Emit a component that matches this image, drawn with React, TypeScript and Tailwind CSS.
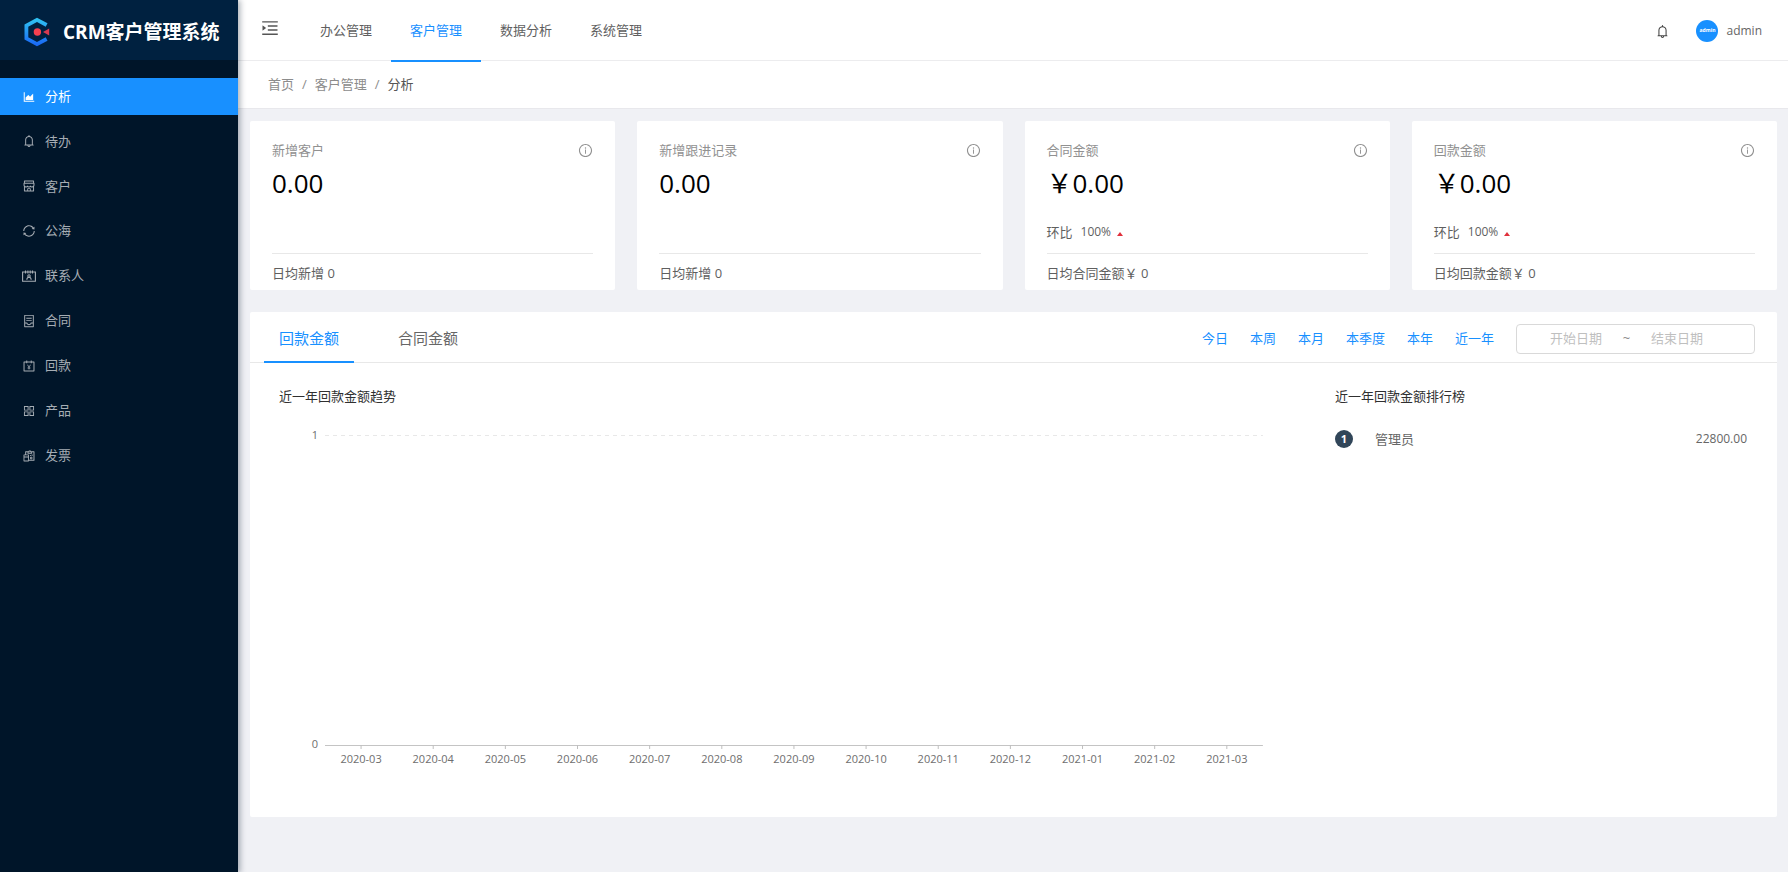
import type { ComponentType } from "react";
import {
  AiOutlineAreaChart,
  AiOutlineBell,
  AiOutlineShop,
  AiOutlineSync,
  AiOutlineContainer,
  AiOutlineAccountBook,
  AiOutlineAppstore,
  AiOutlineReconciliation,
  AiOutlineMenuUnfold,
  AiOutlineInfoCircle,
} from "react-icons/ai";

function ContactsIcon({ className }: { className?: string }) {
  return (
    <svg viewBox="0 0 28 28" className={className} fill="none" stroke="currentColor" strokeWidth="2.2" aria-hidden="true">
      <path d="M1.2 6 H26.8 V24.6 H1.2 Z" />
      <path d="M7 3 V9 M11.8 3 V9 M16.4 3 V9 M21 3 V9" />
      <circle cx="14" cy="14" r="2.4" />
      <path d="M9.6 21.5 C9.8 18 11.6 16.6 14 16.6 S18.2 18 18.4 21.5" />
    </svg>
  );
}

const menu: { label: string; icon: ComponentType<{ className?: string }> }[] = [
  { label: "分析", icon: AiOutlineAreaChart },
  { label: "待办", icon: AiOutlineBell },
  { label: "客户", icon: AiOutlineShop },
  { label: "公海", icon: AiOutlineSync },
  { label: "联系人", icon: ContactsIcon },
  { label: "合同", icon: AiOutlineContainer },
  { label: "回款", icon: AiOutlineAccountBook },
  { label: "产品", icon: AiOutlineAppstore },
  { label: "发票", icon: AiOutlineReconciliation },
];

const topNav = ["办公管理", "客户管理", "数据分析", "系统管理"];

const stats = [
  { title: "新增客户", value: "0.00", footer: "日均新增 0" },
  { title: "新增跟进记录", value: "0.00", footer: "日均新增 0" },
  { title: "合同金额", value: "￥0.00", ratio: "100%", footer: "日均合同金额￥ 0" },
  { title: "回款金额", value: "￥0.00", ratio: "100%", footer: "日均回款金额￥ 0" },
];

const ranges = ["今日", "本周", "本月", "本季度", "本年", "近一年"];

const months = [
  "2020-03", "2020-04", "2020-05", "2020-06", "2020-07", "2020-08", "2020-09",
  "2020-10", "2020-11", "2020-12", "2021-01", "2021-02", "2021-03",
];

function Logo() {
  return (
    <svg viewBox="0 0 26 30" className="h-[30px] w-[26px] shrink-0" aria-hidden="true">
      <defs>
        <linearGradient id="logo" x1="0" y1="0" x2="0" y2="1">
          <stop offset="0" stopColor="#2fc0f2" />
          <stop offset="1" stopColor="#1a6bf5" />
        </linearGradient>
      </defs>
      <path
        d="M22.6 8 L13 2.8 L2.4 8.6 V21.4 L13 27.2 L22.6 22"
        fill="none"
        stroke="url(#logo)"
        strokeWidth="3.8"
      />
      <circle cx="13.4" cy="15" r="3.7" fill="#f5404f" />
      <path d="M19 15 L25.2 11.6 V18.4 Z" fill="#d83a50" />
    </svg>
  );
}

function Sidebar() {
  return (
    <aside className="z-10 w-[238px] shrink-0 bg-[#001529] shadow-[2px_0_6px_rgba(0,21,41,0.35)]">
      <div className="flex h-[60px] items-center gap-[13px] bg-[#002140] pt-1 pl-6">
        <Logo />
        <h1 className="text-[19px] leading-6 font-bold whitespace-nowrap text-white">CRM客户管理系统</h1>
      </div>
      <nav className="mt-[18px] flex h-[396px] flex-col justify-between">
        {menu.map(({ label, icon: Icon }, i) => (
          <a
            key={label}
            href="#"
            className={
              i === 0
                ? "flex h-[37px] items-center gap-[9px] bg-[#1890ff] pl-[22px] text-[13px] text-white"
                : "flex h-[37px] items-center gap-[9px] pl-[22px] text-[13px] text-[#a6adb4]"
            }
          >
            <Icon className="size-[14px]" />
            {label}
          </a>
        ))}
      </nav>
    </aside>
  );
}

function Header() {
  return (
    <header className="flex h-[61px] items-start border-b border-[#ececee] bg-white pr-[26px] pl-[22px]">
      <button type="button" aria-label="展开菜单" className="mt-[18px] text-[#555]">
        <AiOutlineMenuUnfold className="size-5" />
      </button>
      <nav className="ml-[21px] flex text-[13px] text-[#5f5f5f]">
        {topNav.map((label) => (
          <a
            key={label}
            href="#"
            className={
              label === "客户管理"
                ? "h-[62px] border-b-2 border-[#1890ff] px-[19px] leading-[60px] text-[#1890ff]"
                : "h-[62px] px-[19px] leading-[60px]"
            }
          >
            {label}
          </a>
        ))}
      </nav>
      <div className="ml-auto flex h-[62px] items-center text-[12px] text-[#666]">
        <button type="button" aria-label="通知">
          <AiOutlineBell className="size-[15px] text-[#444]" />
        </button>
        <span className="ml-[26px] flex size-[22px] items-center justify-center rounded-full bg-[#1890ff] text-[5px] font-bold text-white">
          admin
        </span>
        <a href="#" className="ml-2">admin</a>
      </div>
    </header>
  );
}

function StatCard({ title, value, ratio, footer }: { title: string; value: string; ratio?: string; footer: string }) {
  return (
    <section className="rounded-xs bg-white px-[22px] pt-[18px] pb-[6px] text-[13px]">
      <div className="flex items-center justify-between leading-[22px] text-[#919191]">
        <h2>{title}</h2>
        <AiOutlineInfoCircle className="size-[15px]" />
      </div>
      <p className="text-[26px] leading-[44px] text-black">{value}</p>
      <div className="mt-[14px] flex h-[34px] items-start text-[#5f5f5f]">
        {ratio && (
          <p className="flex items-center leading-[26px]">
            环比<span className="ml-2 text-[12px]">{ratio}</span>
            <svg viewBox="0 0 6 4" className="mt-1 ml-[6px] h-1 w-[6px]" aria-hidden="true">
              <path d="M3 0 L6 4 H0 Z" fill="#e0303c" />
            </svg>
          </p>
        )}
      </div>
      <p className="border-t border-[#e8e8e8] pt-2 leading-[22px] text-[#5f5f5f]">{footer}</p>
    </section>
  );
}

function TrendChart() {
  const step = 100 / months.length;
  return (
    <svg className="mt-[23px] mr-[56px] ml-[46px] block h-[340px] w-[calc(100%-102px)] overflow-visible text-[11px]" role="img" aria-label="近一年回款金额趋势">
      <g fill="#6e6e6e">
        <text x="-7" y="9" textAnchor="end">1</text>
        <text x="-7" y="318" textAnchor="end">0</text>
      </g>
      <line x1="0" y1="5.5" x2="100%" y2="5.5" stroke="#e8e8e8" strokeDasharray="4 4" />
      <line x1="0" y1="315.5" x2="100%" y2="315.5" stroke="#c4c4c4" />
      {months.map((m, i) => {
        const x = `${step * (i + 0.5)}%`;
        return (
          <g key={m}>
            <line x1={x} x2={x} y1="315" y2="319" stroke="#bfbfbf" />
            <text x={x} y="333" textAnchor="middle" fill="#6e6e6e">{m}</text>
          </g>
        );
      })}
    </svg>
  );
}

function SalesPanel() {
  return (
    <section className="mt-[22px] rounded-xs bg-white pb-[47px] text-[13px]">
      <div className="flex h-[51px] items-start border-b border-[#e8e8e8] pr-[22px] pl-[14px]">
        <div role="tablist" className="flex gap-[29px] text-[15px]">
          <button type="button" role="tab" aria-selected="true" className="h-[51px] border-b-2 border-[#1890ff] px-[15px] pt-1 text-[#1890ff]">
            回款金额
          </button>
          <button type="button" role="tab" aria-selected="false" className="h-[51px] border-b-2 border-transparent px-[15px] pt-1 text-[#666]">
            合同金额
          </button>
        </div>
        <div className="ml-auto flex h-[53px] items-center gap-[22px]">
          {ranges.map((r) => (
            <a key={r} href="#" className="text-[#1890ff]">{r}</a>
          ))}
          <div className="flex h-[30px] w-[239px] items-center rounded border border-[#d9d9d9] pr-[30px] pl-3 text-[#8c8c8c]">
            <input aria-label="开始日期" placeholder="开始日期" className="w-0 flex-1 text-center outline-none placeholder:text-[#bfbfbf]" />
            <span>~</span>
            <input aria-label="结束日期" placeholder="结束日期" className="w-0 flex-1 text-center outline-none placeholder:text-[#bfbfbf]" />
          </div>
        </div>
      </div>
      <div className="grid grid-cols-[7fr_3fr] pt-[22px]">
        <div className="pl-[29px]">
          <h3 className="leading-[22px] text-[#303030]">近一年回款金额趋势</h3>
          <TrendChart />
        </div>
        <div className="pr-[30px] pl-4">
          <h3 className="leading-[22px] text-[#303030]">近一年回款金额排行榜</h3>
          <ol className="mt-[22px]">
            <li className="flex items-center leading-[20px] text-[#666]">
              <span className="flex size-[18px] items-center justify-center rounded-full bg-[#314659] text-[11px] font-bold text-white">1</span>
              <span className="ml-[22px]">管理员</span>
              <span className="ml-auto text-[12px]">22800.00</span>
            </li>
          </ol>
        </div>
      </div>
    </section>
  );
}

export default function App() {
  return (
    <div className="flex min-h-screen bg-[#f0f1f5] font-['Open_Sans','Noto_Sans_CJK_SC',sans-serif]">
      <Sidebar />
      <div className="min-w-0 flex-1">
        <Header />
        <nav aria-label="面包屑" className="flex h-12 items-center gap-2 border-b border-[#e8e8ec] bg-white pl-[30px] text-[13px] text-[#8c8c8c]">
          <a href="#">首页</a>
          <span>/</span>
          <a href="#">客户管理</a>
          <span>/</span>
          <span className="text-[#555]">分析</span>
        </nav>
        <main className="pt-3 pr-[11px] pb-14 pl-3">
          <div className="grid grid-cols-4 gap-[22px]">
            {stats.map((s) => (
              <StatCard key={s.title} {...s} />
            ))}
          </div>
          <SalesPanel />
        </main>
      </div>
    </div>
  );
}
